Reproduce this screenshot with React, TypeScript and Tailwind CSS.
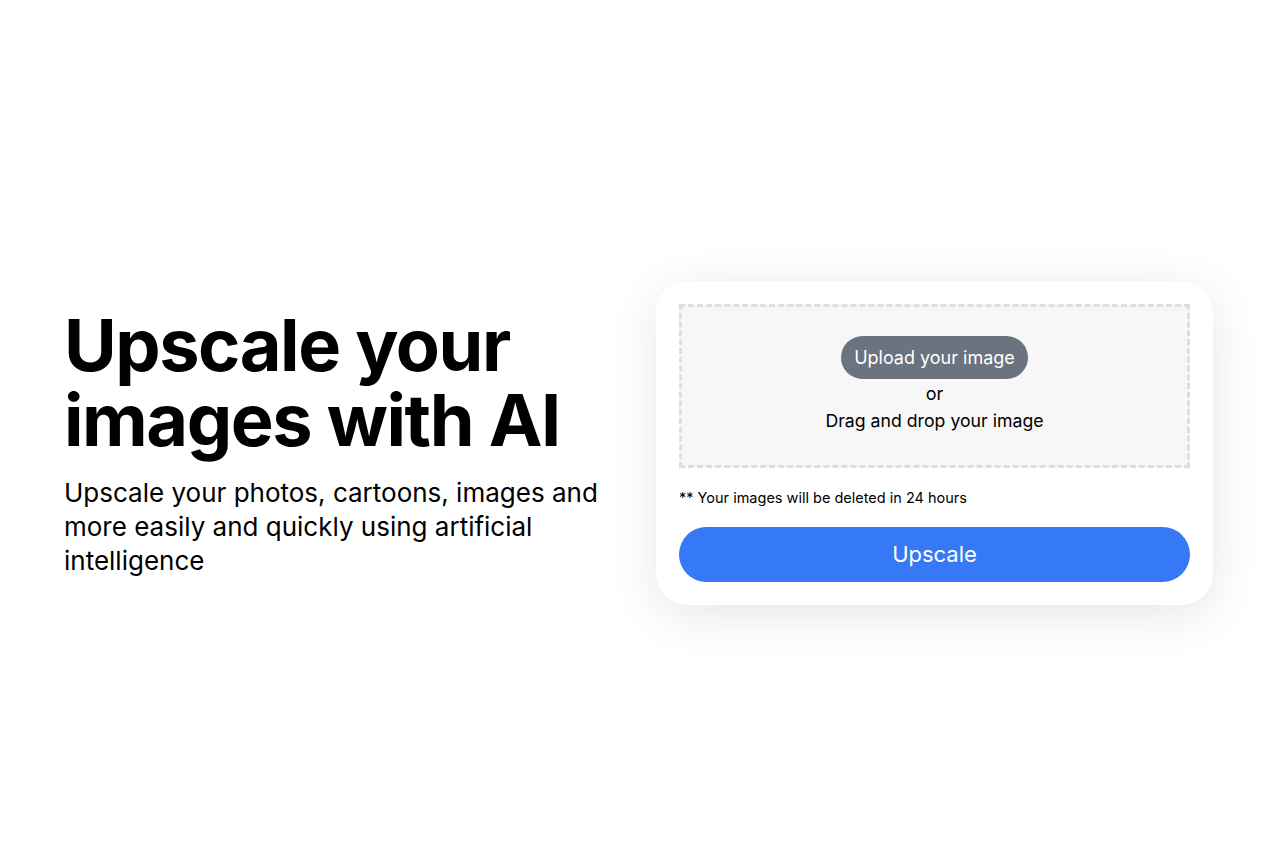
export default function App() {
  return (
    <div
      className="flex min-h-screen w-full items-center bg-white pt-[32px] text-black"
      style={{ fontFamily: "Inter, 'Noto Sans', sans-serif" }}
    >
      <div className="flex w-full items-center justify-between pl-16 pr-[67px]">
        <div className="w-[560px]">
          <h1 className="text-[72px] font-bold leading-[75px] tracking-[-0.02em]">
            Upscale your
            <br />
            images with AI
          </h1>
          <p className="mt-[19px] text-[26px] leading-[34px]">
            Upscale your photos, cartoons, images and more easily and quickly using artificial
            intelligence
          </p>
        </div>

        <div className="w-[557px] rounded-[32px] bg-white p-[23px] shadow-[0_10px_50px_rgba(0,0,0,0.10)]">
          <div className="flex h-[164px] flex-col items-center justify-center border-[3px] border-dashed border-[#dedede] bg-[#f7f7f7]">
            <button
              type="button"
              className="rounded-full bg-[#6b7280] px-[13px] py-[9px] text-[18px] leading-[25px] text-white"
            >
              Upload your image
            </button>
            <span className="mt-[2px] text-[18px] leading-[26px]">or</span>
            <span className="text-[17.7px] leading-[28px]">Drag and drop your image</span>
          </div>
          <p className="mt-[20px] text-[14.5px] leading-[20px]">** Your images will be deleted in 24 hours</p>
          <button
            type="button"
            className="mt-[19px] h-[55px] w-full rounded-full bg-[#3579f6] text-[22px] text-white"
          >
            Upscale
          </button>
        </div>
      </div>
    </div>
  );
}
